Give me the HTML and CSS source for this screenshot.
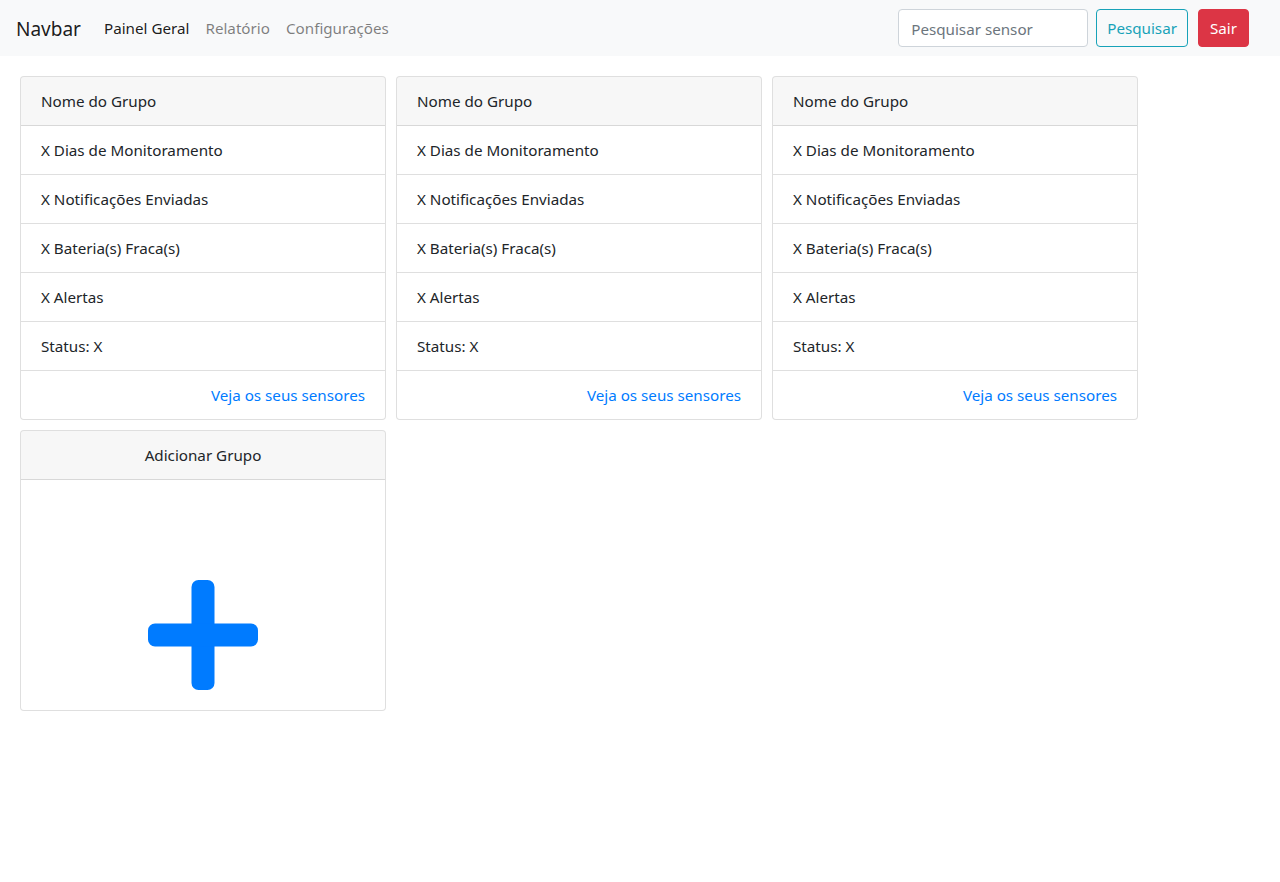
FILE: index.html
```html
<!DOCTYPE html>
<html lang="pt">
<head>
<meta charset="utf-8">
<title>Painel Geral</title>
<link rel="stylesheet" href="styles.css">
</head>
<body>
<nav class="navbar">
  <a class="brand" href="#">Navbar</a>
  <ul class="nav">
    <li><a class="nav-link active" href="#">Painel Geral</a></li>
    <li><a class="nav-link" href="#">Relatório</a></li>
    <li><a class="nav-link" href="#">Configurações</a></li>
  </ul>
  <form class="search">
    <input class="search-input" type="text" placeholder="Pesquisar sensor">
    <button class="btn btn-outline-info" type="button">Pesquisar</button>
    <button class="btn btn-danger" type="button">Sair</button>
  </form>
</nav>
<main class="cards">
  <section class="card">
    <div class="card-header">Nome do Grupo</div>
    <ul class="list">
      <li class="item">X Dias de Monitoramento</li>
      <li class="item">X Notificações Enviadas</li>
      <li class="item">X Bateria(s) Fraca(s)</li>
      <li class="item">X Alertas</li>
      <li class="item">Status: X</li>
      <li class="item item-link"><a href="#">Veja os seus sensores</a></li>
    </ul>
  </section>
  <section class="card">
    <div class="card-header">Nome do Grupo</div>
    <ul class="list">
      <li class="item">X Dias de Monitoramento</li>
      <li class="item">X Notificações Enviadas</li>
      <li class="item">X Bateria(s) Fraca(s)</li>
      <li class="item">X Alertas</li>
      <li class="item">Status: X</li>
      <li class="item item-link"><a href="#">Veja os seus sensores</a></li>
    </ul>
  </section>
  <section class="card">
    <div class="card-header">Nome do Grupo</div>
    <ul class="list">
      <li class="item">X Dias de Monitoramento</li>
      <li class="item">X Notificações Enviadas</li>
      <li class="item">X Bateria(s) Fraca(s)</li>
      <li class="item">X Alertas</li>
      <li class="item">Status: X</li>
      <li class="item item-link"><a href="#">Veja os seus sensores</a></li>
    </ul>
  </section>
  <section class="card">
    <div class="card-header center">Adicionar Grupo</div>
    <div class="add-body">
      <svg class="plus" width="110" height="110" viewBox="0 0 110 110" aria-hidden="true">
        <rect x="43.5" y="0" width="23" height="110" rx="7" fill="#007bff"/>
        <rect x="0" y="43.5" width="110" height="23" rx="7" fill="#007bff"/>
      </svg>
    </div>
  </section>
</main>
</body>
</html>
```

FILE: styles.css
```css
* { box-sizing: border-box; }
html, body { margin: 0; padding: 0; }
body {
  font-family: "Noto Sans", "Open Sans", "Liberation Sans", sans-serif;
  font-size: 15.2px;
  line-height: 24px;
  color: #212529;
  background: #fff;
}
a { text-decoration: none; }

.navbar {
  display: flex;
  align-items: center;
  height: 56px;
  padding: 0 16px;
  background: #f8f9fa;
}
.brand {
  font-size: 19px;
  line-height: 30px;
  color: rgba(0,0,0,.9);
  margin-right: 15px;
  padding-top: 2px;
}
.nav {
  display: flex;
  list-style: none;
  margin: 0;
  padding: 0;
  flex: 1;
}
.nav-link {
  display: block;
  padding: 8px;
  color: rgba(0,0,0,.5);
}
.nav-link.active { color: rgba(0,0,0,.9); }

.search {
  display: flex;
  align-items: center;
  margin: 0 15px 0 0;
}
.search-input {
  width: 190px;
  height: 38px;
  padding: 7px 12px 5px;
  border: 1px solid #ced4da;
  border-radius: 4px;
  font: inherit;
  color: #495057;
  background: #fff;
}
.search-input::placeholder { color: #6c757d; }
.btn {
  height: 38px;
  padding: 6px 11px;
  font: inherit;
  border-radius: 4px;
  border: 1px solid transparent;
  cursor: pointer;
}
.btn-outline-info {
  margin-left: 8px;
  padding: 6px 10px;
  color: #17a2b8;
  border-color: #17a2b8;
  background: transparent;
}
.btn-danger {
  margin-left: 10px;
  color: #fff;
  background: #dc3545;
  border-color: #dc3545;
}

.cards {
  display: flex;
  flex-wrap: wrap;
  align-items: flex-start;
  gap: 10px;
  padding: 20px;
}
.card {
  width: 366px;
  border: 1px solid rgba(0,0,0,.125);
  border-radius: 4px;
  background: #fff;
  overflow: hidden;
}
.card-header {
  padding: 12px 20px;
  background: rgba(0,0,0,.03);
  border-bottom: 1px solid rgba(0,0,0,.125);
}
.card-header.center { text-align: center; }
.list {
  list-style: none;
  margin: 0;
  padding: 0;
}
.item {
  padding: 12px 20px;
  border-bottom: 1px solid rgba(0,0,0,.125);
}
.item:last-child { border-bottom: 0; }
.item-link { text-align: right; }
.item-link a { color: #007bff; }

.add-body {
  display: flex;
  justify-content: center;
  padding: 100px 20px 20px;
}
.plus { display: block; }
```
